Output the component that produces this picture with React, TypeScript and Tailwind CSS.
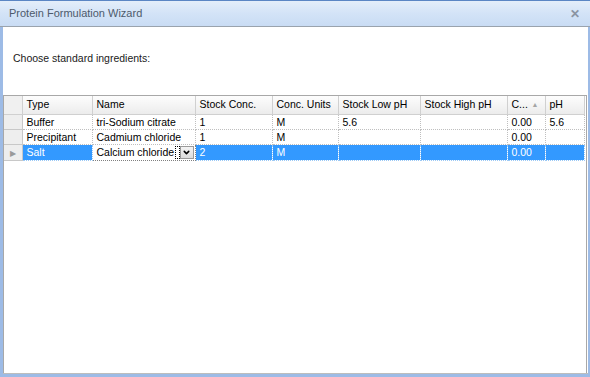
import { ChevronDown } from "lucide-react";

const cols = [
  { key: "type", label: "Type", w: 70 },
  { key: "name", label: "Name", w: 103 },
  { key: "stock", label: "Stock Conc.", w: 77 },
  { key: "units", label: "Conc. Units", w: 66 },
  { key: "low", label: "Stock Low pH", w: 82 },
  { key: "high", label: "Stock High pH", w: 87 },
  { key: "c", label: "C...", w: 38 },
  { key: "ph", label: "pH", w: 39 },
];

const rows = [
  { type: "Buffer", name: "tri-Sodium citrate", stock: "1", units: "M", low: "5.6", high: "", c: "0.00", ph: "5.6" },
  { type: "Precipitant", name: "Cadmium chloride", stock: "1", units: "M", low: "", high: "", c: "0.00", ph: "" },
  { type: "Salt", name: "Calcium chloride", stock: "2", units: "M", low: "", high: "", c: "0.00", ph: "" },
];

export default function App() {
  return (
    <div
      className="w-[590px] h-[377px] flex flex-col bg-[#9dbbe6] border-t border-[#5b86c4] overflow-hidden"
      style={{ fontFamily: '"Liberation Sans", Arial, sans-serif' }}
    >
      {/* title bar */}
      <div className="h-[26px] shrink-0 flex items-center justify-between pl-[9px] pr-[10px] bg-gradient-to-b from-[#e4eefa] via-[#d3e3f7] to-[#c9dcf4] border-b border-[#9aa3ad]">
        <span className="text-[11px] text-[#4d5a6b]">Protein Formulation Wizard</span>
        <span className="text-[12px] font-bold text-[#8a94a2] leading-none">✕</span>
      </div>

      {/* body */}
      <div className="flex-1 flex flex-col ml-[3px] mr-[2px] mb-[3px] bg-white border-b border-[#bdbdbd]">
        <div className="h-[68px] shrink-0 pl-[10px] pt-[24px] text-[10.5px] text-[#1a1a1a]">
          Choose standard ingredients:
        </div>

        <div className="flex-1 border-t border-r border-[#a8a8a8] border-l border-l-[#a8a8a8] mr-[1px]">
          <table className="table-fixed border-collapse text-[10.5px] text-black">
            <colgroup>
              <col className="w-[18px]" />
              {cols.map((c) => (
                <col key={c.key} style={{ width: c.w }} />
              ))}
            </colgroup>
            <thead>
              <tr className="h-[18px] bg-gradient-to-b from-[#fdfdfd] to-[#ececec]">
                <th className="border-r border-b border-[#d0d0d0] bg-[#f0f0f0]" />
                {cols.map((c) => (
                  <th
                    key={c.key}
                    className="border-r border-b border-[#d0d0d0] text-left font-normal pl-[4px] whitespace-nowrap overflow-hidden"
                  >
                    {c.key === "c" ? (
                      <span className="flex items-center justify-between pr-[6px]">
                        <span>C...</span>
                        <span className="text-[7px] text-[#a5a5a5]">▲</span>
                      </span>
                    ) : (
                      c.label
                    )}
                  </th>
                ))}
              </tr>
            </thead>
            <tbody>
              {rows.map((r, i) => {
                const sel = i === 2;
                return (
                  <tr key={i} className={sel ? "h-[16px] bg-[#3399ff] text-white" : "h-[15px]"}>
                    <td className="bg-[#eeeeee] border-r border-b border-[#c8c8c8] p-0 text-center">
                      {sel && <span className="text-[8px] text-[#9a9a9a] leading-none">▶</span>}
                    </td>
                    {cols.map((c) => {
                      const v = (r as Record<string, string>)[c.key];
                      if (sel && c.key === "name") {
                        return (
                          <td key={c.key} className="p-0 bg-white border-r border-b border-dotted border-[#808080]">
                            <div className="flex items-center h-[15px] text-black">
                              <span className="pl-[4px] pr-[1px] whitespace-nowrap">{v}</span>
                              <span className="flex-1 h-[13px] border border-dotted border-black" />
                              <span className="w-[14px] h-[13px] mr-[1px] flex items-center justify-center bg-gradient-to-b from-[#f4f4f4] to-[#dcdcdc] border border-[#9a9a9a]">
                                <ChevronDown size={9} strokeWidth={4} className="text-black" />
                              </span>
                            </div>
                          </td>
                        );
                      }
                      return (
                        <td
                          key={c.key}
                          className={
                            "pl-[4px] py-0 leading-[14px] whitespace-nowrap overflow-hidden border-r border-b border-dotted " +
                            (sel ? "border-[#9cc9f5]" : "border-[#bfbfbf]")
                          }
                        >
                          {v}
                        </td>
                      );
                    })}
                  </tr>
                );
              })}
            </tbody>
          </table>
        </div>
      </div>
    </div>
  );
}
